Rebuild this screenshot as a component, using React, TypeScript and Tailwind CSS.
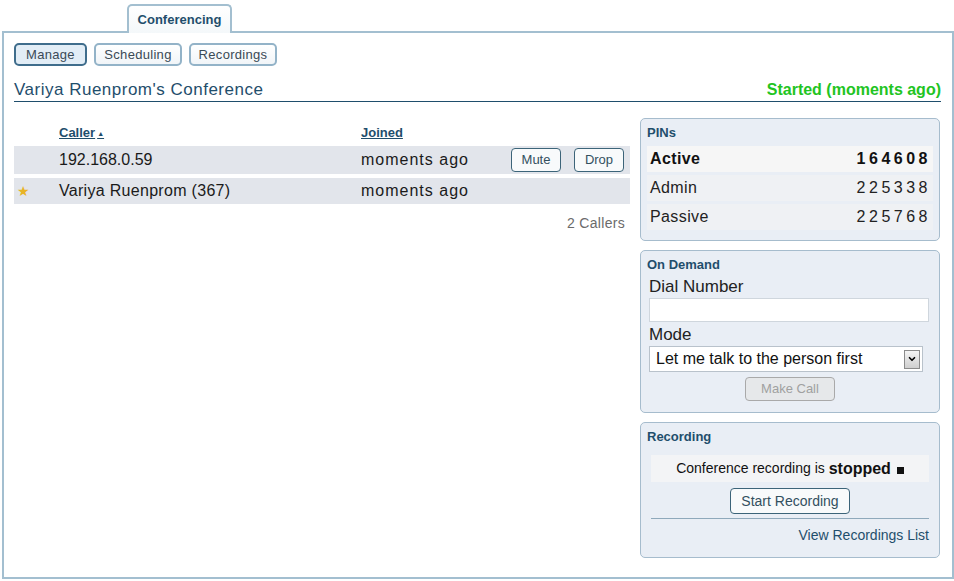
import { ChevronDown } from "lucide-react";

const font = "font-['Liberation_Sans',Arial,sans-serif]";

function NavButton({ label, active, className = "" }: { label: string; active?: boolean; className?: string }) {
  return (
    <button
      className={
        "h-[23px] rounded-[5px] border-2 text-[13px] tracking-[0.3px] text-[#3a4a56] " +
        (active
          ? "border-[#3f6d8c] bg-[#e2edf6] "
          : "border-[#93b3c8] bg-gradient-to-b from-white to-[#f1f5f8] ") +
        className
      }
    >
      {label}
    </button>
  );
}

function SmallButton({ label, className = "" }: { label: string; className?: string }) {
  return (
    <button
      className={
        "h-[24px] rounded-[4px] border border-[#3c6479] bg-[#f8fafb] text-[13px] text-[#33505f] " +
        className
      }
    >
      {label}
    </button>
  );
}

function Box({ title, children, className = "" }: { title: string; children: React.ReactNode; className?: string }) {
  return (
    <div
      className={
        "rounded-[5px] border border-[#a6bccd] bg-[#e9eef5] px-[6px] pt-[6px] " + className
      }
    >
      <div className="h-[16px] text-[13px] font-bold leading-[16px] text-[#1f4e6c]">{title}</div>
      {children}
    </div>
  );
}

function PinRow({ label, pin, bold }: { label: string; pin: string; bold?: boolean }) {
  return (
    <div
      className={
        "flex h-[26px] items-center justify-between pl-[3px] pr-[2px] text-[16px] " +
        (bold ? "bg-[#f6f6f6] font-bold text-[#111]" : "bg-[#eff1f4] text-[#222]")
      }
    >
      <span className="tracking-[0.4px]">{label}</span>
      <span className="tracking-[3.5px]">{pin}</span>
    </div>
  );
}

export default function App() {
  return (
    <div className={"h-[581px] w-[954px] overflow-hidden bg-white " + font}>
      <div className="flex h-[31px] items-end pl-[127px]">
        <div className="relative z-10 -mb-[2px] flex h-[29px] w-[105px] items-center justify-center rounded-t-[5px] border-2 border-b-0 border-[#a3bfd0] bg-gradient-to-b from-white to-[#f4f8fa] text-[13px] font-bold text-[#1f4e6c]">
          Conferencing
        </div>
      </div>

      <div className="ml-[2px] h-[548px] w-[952px] border-2 border-[#a3bfd0] pl-[10px] pr-[11px] pt-[10px]">
        <div className="flex gap-[7px]">
          <NavButton label="Manage" active className="w-[73px]" />
          <NavButton label="Scheduling" className="w-[88px]" />
          <NavButton label="Recordings" className="w-[88px]" />
        </div>

        <div className="mt-[14px] flex h-[22px] items-end justify-between border-b border-[#1f4e6c] pb-[1px]">
          <span className="text-[17px] leading-[20px] tracking-[0.5px] text-[#1f4e6c]">Variya Ruenprom's Conference</span>
          <span className="text-[16px] font-bold leading-[20px] text-[#22c41f]">Started (moments ago)</span>
        </div>

        <div className="mt-[16px] flex gap-[10px]">
          <div className="w-[616px]">
            <div className="mt-[7px] flex h-[16px] items-center text-[13px] font-bold text-[#1f4e6c]">
              <span className="ml-[45px] w-[302px] underline">
                Caller<span className="ml-[2px] align-middle text-[7px] no-underline">▲</span>
              </span>
              <span className="underline">Joined</span>
            </div>
            <div className="mt-[5px] flex h-[28px] items-center bg-[#e2e5eb] text-[16px] text-[#1a1a1a]">
              <span className="ml-[45px] w-[302px]">192.168.0.59</span>
              <span className="w-[150px] tracking-[1px]">moments ago</span>
              <SmallButton label="Mute" className="w-[50px]" />
              <SmallButton label="Drop" className="ml-[13px] w-[50px]" />
            </div>
            <div className="mt-[4px] flex h-[26px] items-center bg-[#e2e5eb] text-[16px] text-[#1a1a1a]">
              <span className="w-[45px] pl-[3px] text-[14px] text-[#e8b426]">★</span>
              <span className="w-[302px] tracking-[0.3px]">Variya Ruenprom (367)</span>
              <span className="tracking-[1px]">moments ago</span>
            </div>
            <div className="mt-[9px] pr-[5px] text-right text-[14px] tracking-[0.3px] text-[#6b6b6b]">2 Callers</div>
          </div>

          <div className="flex w-[300px] flex-col gap-[9px]">
            <Box title="PINs" className="h-[123px]">
              <div className="mt-[5px] flex flex-col gap-[3px]">
                <PinRow label="Active" pin="164608" bold />
                <PinRow label="Admin" pin="225338" />
                <PinRow label="Passive" pin="225768" />
              </div>
            </Box>

            <Box title="On Demand" className="h-[163px]">
              <div className="mt-[3px] pl-[2px] text-[17px] leading-[22px] text-[#222]">Dial Number</div>
              <input className="ml-[2px] h-[24px] w-[280px] border border-[#cfd6dd] bg-white outline-none" />
              <div className="mt-[2px] pl-[2px] text-[17px] leading-[22px] text-[#222]">Mode</div>
              <div className="ml-[2px] flex h-[26px] w-[274px] items-center justify-between border border-[#b9c2cb] bg-white pl-[6px] pr-[2px] text-[16px] text-[#111]">
                <span>Let me talk to the person first</span>
                <span className="flex h-[19px] w-[16px] items-center justify-center border border-[#8b8b8b] bg-gradient-to-b from-[#f4f4f4] to-[#cfcfcf]">
                  <ChevronDown size={10} strokeWidth={4} className="text-black" />
                </span>
              </div>
              <div className="mt-[5px] flex justify-center">
                <button className="h-[24px] w-[90px] rounded-[4px] border border-[#a9a9a9] bg-[#e6e8ea] text-[13px] text-[#a0a0a0]">
                  Make Call
                </button>
              </div>
            </Box>

            <Box title="Recording" className="h-[136px]">
              <div className="mx-[4px] mt-[10px] flex h-[27px] items-center justify-center bg-[#f3f4f6] text-[14px] text-[#111]">
                Conference recording is&nbsp;<b className="text-[16px]">stopped</b>
                <span className="ml-[6px] mt-[3px] inline-block h-[7px] w-[7px] bg-[#111]" />
              </div>
              <div className="mt-[6px] flex justify-center">
                <SmallButton label="Start Recording" className="h-[26px] w-[120px] text-[14px]" />
              </div>
              <div className="mx-[4px] mt-[4px] border-t border-[#8fa9bb]" />
              <div className="mx-[4px] mt-[6px] text-right text-[14px] text-[#1f4e6c]">View Recordings List</div>
            </Box>
          </div>
        </div>
      </div>
    </div>
  );
}
